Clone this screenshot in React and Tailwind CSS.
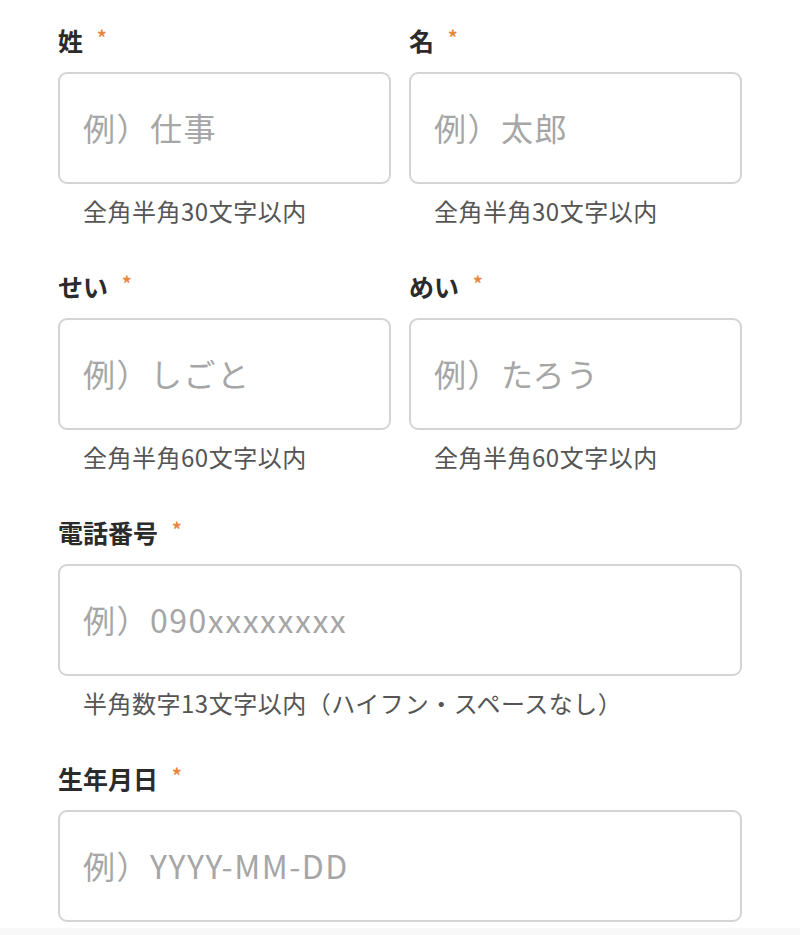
const font = { fontFamily: '"Noto Sans CJK JP", "Noto Sans", sans-serif' };

function Label({ children }) {
  return (
    <div className="flex items-start h-[36px] text-[25px] leading-[36px] font-bold text-[#2b2b2b]">
      {children}
      <span className="ml-[14px] mt-[-3px] text-[19px] font-bold text-[#e8873a]">*</span>
    </div>
  );
}

function Field({ label, placeholder, help }) {
  return (
    <div className="flex flex-col min-w-0">
      <Label>{label}</Label>
      <input
        type="text"
        placeholder={placeholder}
        className="mt-[14px] h-[112px] w-full px-[23px] pb-[3px] text-[32px] tracking-[1.5px] text-[#333] bg-white border-2 border-[#d4d4d4] rounded-[9px] outline-none placeholder:text-[#a6a6a6]"
        style={font}
      />
      {help && (
        <div className="mt-[10px] h-[34px] pl-[25px] text-[24px] tracking-[0.5px] leading-[34px] text-[#555]">
          {help}
        </div>
      )}
    </div>
  );
}

export default function App() {
  return (
    <div className="w-[800px] h-[935px] overflow-hidden bg-white flex flex-col" style={font}>
      <div className="flex flex-col gap-[40px] px-[58px] pt-[22px]">
        <div className="grid grid-cols-2 gap-[18px]">
          <Field label="姓" placeholder="例）仕事" help="全角半角30文字以内" />
          <Field label="名" placeholder="例）太郎" help="全角半角30文字以内" />
        </div>
        <div className="grid grid-cols-2 gap-[18px]">
          <Field label="せい" placeholder="例）しごと" help="全角半角60文字以内" />
          <Field label="めい" placeholder="例）たろう" help="全角半角60文字以内" />
        </div>
        <Field
          label="電話番号"
          placeholder="例）090xxxxxxxx"
          help="半角数字13文字以内（ハイフン・スペースなし）"
        />
        <Field label="生年月日" placeholder="例）YYYY-MM-DD" />
      </div>
      <div className="mt-[6px] flex-1 bg-[#f8f8f8]"></div>
    </div>
  );
}
